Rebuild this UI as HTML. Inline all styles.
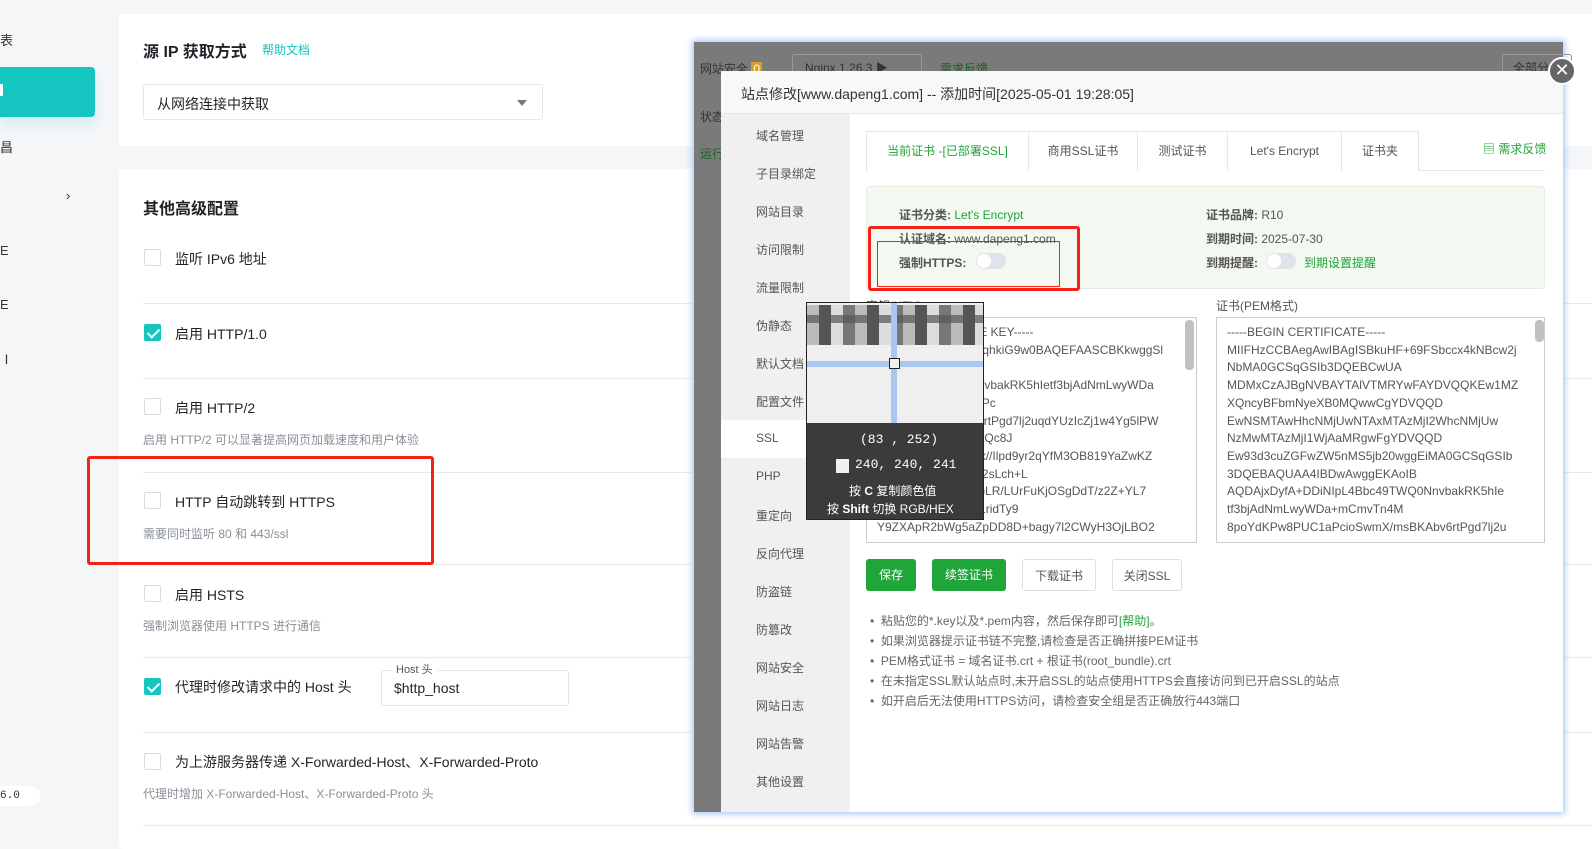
<!DOCTYPE html>
<html><head><meta charset="utf-8"><style>
*{box-sizing:border-box;margin:0;padding:0}
body{width:1592px;height:832px;overflow:hidden;background:#f5f6f8;font-family:"Liberation Sans","Noto Sans CJK SC",sans-serif;position:relative;color:#1f2329}
.a{position:absolute;white-space:nowrap}
.card{position:absolute;background:#fff;border-radius:4px}
.cb{position:absolute;width:17px;height:17px;border:1px solid #d8dbe0;border-radius:2px;background:#fff}
.cb.on{background:#14c5c0;border-color:#14c5c0}
.cb.on:after{content:"";position:absolute;left:5px;top:1px;width:5px;height:10px;border:solid #fff;border-width:0 2px 2px 0;transform:rotate(45deg)}
.lbl{font-size:14px;color:#1f2329}
.desc{font-size:12px;color:#8a8f99}
.sep{position:absolute;left:143px;right:0;height:1px;background:#e8eaed}
.nav{position:absolute;left:756px;font-size:12px;color:#555}
.m{font-size:12px;color:#555}
.btn{position:absolute;top:559px;height:32px;border-radius:3px;font-size:12px;line-height:32px;text-align:center}
.g{background:#20a53a;color:#fff}
.w{background:#fff;border:1px solid #dcdfe6;color:#555}
.tab{position:absolute;top:131px;height:40px;border:1px solid #e4e6eb;border-bottom:none;background:#fff;font-size:12px;color:#555;text-align:center;line-height:38px}
</style></head><body>
<div class="a" style="left:0;top:30px;font-size:13px;color:#333">表</div>
<div class="a" style="left:0;top:67px;width:95px;height:50px;background:#14c5c0;border-radius:0 4px 4px 0;box-shadow:0 8px 14px rgba(20,197,192,.15)"></div>
<div class="a" style="left:0;top:84px;width:3px;height:12px;background:#fff"></div>
<div class="a" style="left:0;top:137px;font-size:13px;color:#333">昌</div>
<div class="a" style="left:66px;top:188px;font-size:13px;color:#333">›</div>
<div class="a" style="left:0;top:243px;font-size:13px;color:#333">E</div>
<div class="a" style="left:0;top:297px;font-size:13px;color:#333">E</div>
<div class="a" style="left:0;top:349px;font-size:13px;color:#333">Ⅰ</div>
<div class="a" style="left:0;top:786px;width:40px;height:20px;background:#fff;border-radius:0 10px 10px 0;font-size:11px;line-height:20px;font-family:'Liberation Mono',monospace;color:#333">6.0</div>

<div class="card" style="left:119px;top:14px;width:1480px;height:132px"></div>
<div class="a" style="left:143px;top:38px;font-size:16px;font-weight:bold">源 IP 获取方式</div>
<div class="a" style="left:262px;top:41px;font-size:12px;color:#14c5c0">帮助文档</div>
<div class="a" style="left:143px;top:84px;width:400px;height:36px;border:1px solid #e3e6ea;border-radius:3px;background:#fff"></div>
<div class="a" style="left:157px;top:94px;font-size:14px">从网络连接中获取</div>
<div class="a" style="left:517px;top:100px;width:0;height:0;border-left:5px solid transparent;border-right:5px solid transparent;border-top:6px solid #777"></div>

<div class="card" style="left:119px;top:169px;width:1480px;height:680px"></div>
<div class="a" style="left:143px;top:195px;font-size:16px;font-weight:bold">其他高级配置</div>
<div class="cb" style="left:144px;top:249px"></div><div class="a lbl" style="left:175px;top:249px">监听 IPv6 地址</div>
<div class="sep" style="top:303px"></div>
<div class="cb on" style="left:144px;top:324px"></div><div class="a lbl" style="left:175px;top:324px">启用 HTTP/1.0</div>
<div class="sep" style="top:378px"></div>
<div class="cb" style="left:144px;top:398px"></div><div class="a lbl" style="left:175px;top:398px">启用 HTTP/2</div>
<div class="a desc" style="left:143px;top:431px">启用 HTTP/2 可以显著提高网页加载速度和用户体验</div>
<div class="sep" style="top:472px"></div>
<div class="cb" style="left:144px;top:492px"></div><div class="a lbl" style="left:175px;top:492px">HTTP 自动跳转到 HTTPS</div>
<div class="a desc" style="left:143px;top:525px">需要同时监听 80 和 443/ssl</div>
<div class="sep" style="top:564px"></div>
<div class="cb" style="left:144px;top:585px"></div><div class="a lbl" style="left:175px;top:585px">启用 HSTS</div>
<div class="a desc" style="left:143px;top:617px">强制浏览器使用 HTTPS 进行通信</div>
<div class="sep" style="top:657px"></div>
<div class="cb on" style="left:144px;top:678px"></div><div class="a lbl" style="left:175px;top:677px">代理时修改请求中的 Host 头</div>
<div class="a" style="left:381px;top:670px;width:188px;height:36px;border:1px solid #e3e6ea;border-radius:3px"></div>
<div class="a" style="left:392px;top:661px;font-size:11px;color:#555;background:#fff;padding:0 4px">Host 头</div>
<div class="a" style="left:394px;top:680px;font-size:14px">$http_host</div>
<div class="sep" style="top:732px"></div>
<div class="cb" style="left:144px;top:753px"></div><div class="a lbl" style="left:175px;top:752px">为上游服务器传递 X-Forwarded-Host、X-Forwarded-Proto</div>
<div class="a desc" style="left:143px;top:785px">代理时增加 X-Forwarded-Host、X-Forwarded-Proto 头</div>
<div class="sep" style="top:825px"></div>
<div class="a" style="left:87px;top:456px;width:347px;height:109px;border:3px solid #f5201a;border-radius:3px"></div>

<div class="a" style="left:694px;top:42px;width:869px;height:770px;background:#7a7a7a;box-shadow:0 0 6px 2px #a9c9f5"></div>
<div class="a" style="left:700px;top:60px;font-size:12px;color:#333">网站安全 <span style="background:#d8a021;color:#fff;padding:0 2px">0</span></div>
<div class="a" style="left:792px;top:54px;width:130px;height:22px;border:1px solid #999;border-radius:3px;font-size:12px;color:#333;padding:4px 0 0 12px">Nginx 1.26.3 ▶</div>
<div class="a" style="left:940px;top:60px;font-size:12px;color:#1c5d28">需求反馈</div>
<div class="a" style="left:1502px;top:54px;width:70px;height:22px;border:1px solid #999;border-radius:3px;font-size:12px;color:#333;padding:4px 0 0 10px">全部分</div>
<div class="a" style="left:700px;top:108px;font-size:12px;color:#333">状态</div>
<div class="a" style="left:700px;top:145px;font-size:12px;color:#1c5d28">运行</div>

<div class="a" style="left:721px;top:71px;width:842px;height:741px;background:#fff"></div>
<div class="a" style="left:721px;top:71px;width:842px;height:43px;background:#f8f8f8;border-bottom:1px solid #e8e8e8"></div>
<div class="a" style="left:741px;top:84px;font-size:14px;color:#333">站点修改[www.dapeng1.com] -- 添加时间[2025-05-01 19:28:05]</div>
<div class="a" style="left:1548px;top:57px;width:28px;height:28px;border-radius:50%;background:#666;border:2px solid #fff;color:#fff;font-size:18px;line-height:23px;text-align:center">✕</div>
<div class="a" style="left:721px;top:114px;width:129px;height:698px;background:#f0f0f0"></div>
<div class="a" style="left:721px;top:420px;width:129px;height:38px;background:#fff"></div>
<div class="nav" style="top:127px">域名管理</div><div class="nav" style="top:165px">子目录绑定</div>
<div class="nav" style="top:203px">网站目录</div><div class="nav" style="top:241px">访问限制</div>
<div class="nav" style="top:279px">流量限制</div><div class="nav" style="top:317px">伪静态</div>
<div class="nav" style="top:355px">默认文档</div><div class="nav" style="top:393px">配置文件</div>
<div class="nav" style="top:431px">SSL</div><div class="nav" style="top:469px">PHP</div>
<div class="nav" style="top:507px">重定向</div><div class="nav" style="top:545px">反向代理</div>
<div class="nav" style="top:583px">防盗链</div><div class="nav" style="top:621px">防篡改</div>
<div class="nav" style="top:659px">网站安全</div><div class="nav" style="top:697px">网站日志</div>
<div class="nav" style="top:735px">网站告警</div><div class="nav" style="top:773px">其他设置</div>

<div class="a" style="left:866px;top:170px;width:679px;height:1px;background:#e4e6eb"></div>
<div class="tab" style="left:866px;width:163px;color:#20a53a;border-bottom:1px solid #fff;height:41px">当前证书 -[已部署SSL]</div>
<div class="tab" style="left:1028px;width:110px">商用SSL证书</div>
<div class="tab" style="left:1137px;width:91px">测试证书</div>
<div class="tab" style="left:1227px;width:115px">Let's Encrypt</div>
<div class="tab" style="left:1341px;width:78px">证书夹</div>
<div class="a" style="left:1483px;top:140px;font-size:12px;color:#20a53a">▤ 需求反馈</div>

<div class="a" style="left:866px;top:186px;width:679px;height:103px;background:#f3f8f1;border:1px solid #e4eee0;border-radius:3px"></div>
<div class="a m" style="left:899px;top:206px"><b style="color:#555">证书分类:</b> <span style="color:#20a53a">Let's Encrypt</span></div>
<div class="a m" style="left:899px;top:230px"><b style="color:#555">认证域名:</b> www.dapeng1.com</div>
<div class="a m" style="left:899px;top:254px"><b style="color:#555">强制HTTPS:</b></div>
<div class="a" style="left:976px;top:253px;width:30px;height:16px;border-radius:8px;background:#e0e3ea"><div style="margin:1px;width:14px;height:14px;border-radius:50%;background:#fff"></div></div>
<div class="a m" style="left:1206px;top:206px"><b style="color:#555">证书品牌:</b> R10</div>
<div class="a m" style="left:1206px;top:230px"><b style="color:#555">到期时间:</b> 2025-07-30</div>
<div class="a m" style="left:1206px;top:254px"><b style="color:#555">到期提醒:</b></div>
<div class="a" style="left:1266px;top:253px;width:30px;height:16px;border-radius:8px;background:#e0e3ea"><div style="margin:1px;width:14px;height:14px;border-radius:50%;background:#fff"></div></div>
<div class="a m" style="left:1304px;top:254px;color:#20a53a">到期设置提醒</div>
<div class="a" style="left:868px;top:226px;width:212px;height:65px;border:3px solid #f5201a;border-radius:3px"></div>
<div class="a" style="left:877px;top:241px;width:183px;height:46px;border:1px solid #f5201a"></div>

<div class="a m" style="left:866px;top:297px">密钥(KEY)</div>
<div class="a m" style="left:1216px;top:297px">证书(PEM格式)</div>
<div class="a" style="left:866px;top:317px;width:331px;height:226px;border:1px solid #ccc;overflow:hidden;font-size:12px;color:#555;line-height:17.7px;padding:6px 10px">-----BEGIN PRIVATE KEY-----<br>MIIEvQIBADANBgkqhkiG9w0BAQEFAASCBKkwggSl<br>AQDAjxDyfA+DDiNI<br>IpL4Bbc49TWQ0NnvbakRK5hIetf3bjAdNmLwyWDa<br>8poYdKPw8PUC1aPc<br>ioSwmX/msBKAbv6rtPgd7lj2uqdYUzIcZj1w4Yg5lPW<br>H7oDQIXoEYt5e7otQc8J<br>L8hxN6gqNzCaRajx//Ilpd9yr2qYfM3OB819YaZwKZ<br>2UVi1VicZvpMGGT2sLch+L<br>tqsZgnUuXtA6dqjZpLR/LUrFuKjOSgDdT/z2Z+YL7<br>0b0DTNWkqcCvibt1ridTy9<br>Y9ZXApR2bWg5aZpDD8D+bagy7l2CWyH3OjLBO2</div>
<div class="a" style="left:1185px;top:320px;width:9px;height:50px;background:#c1c1c1;border-radius:4px"></div>
<div class="a" style="left:1216px;top:317px;width:329px;height:226px;border:1px solid #ccc;overflow:hidden;font-size:12px;color:#555;line-height:17.7px;padding:6px 10px">-----BEGIN CERTIFICATE-----<br>MIIFHzCCBAegAwIBAgISBkuHF+69FSbccx4kNBcw2j<br>NbMA0GCSqGSIb3DQEBCwUA<br>MDMxCzAJBgNVBAYTAlVTMRYwFAYDVQQKEw1MZ<br>XQncyBFbmNyeXB0MQwwCgYDVQQD<br>EwNSMTAwHhcNMjUwNTAxMTAzMjI2WhcNMjUw<br>NzMwMTAzMjI1WjAaMRgwFgYDVQQD<br>Ew93d3cuZGFwZW5nMS5jb20wggEiMA0GCSqGSIb<br>3DQEBAQUAA4IBDwAwggEKAoIB<br>AQDAjxDyfA+DDiNIpL4Bbc49TWQ0NnvbakRK5hIe<br>tf3bjAdNmLwyWDa+mCmvTn4M<br>8poYdKPw8PUC1aPcioSwmX/msBKAbv6rtPgd7lj2u</div>
<div class="a" style="left:1535px;top:320px;width:9px;height:22px;background:#c1c1c1;border-radius:4px"></div>

<div class="btn g" style="left:866px;width:50px">保存</div>
<div class="btn g" style="left:932px;width:74px">续签证书</div>
<div class="btn w" style="left:1022px;width:74px">下载证书</div>
<div class="btn w" style="left:1112px;width:70px">关闭SSL</div>
<div class="a m" style="left:870px;top:611px;line-height:20px;color:#666">
• &nbsp;粘贴您的*.key以及*.pem内容，然后保存即可<span style="color:#20a53a">[帮助]</span>。<br>
• &nbsp;如果浏览器提示证书链不完整,请检查是否正确拼接PEM证书<br>
• &nbsp;PEM格式证书 = 域名证书.crt + 根证书(root_bundle).crt<br>
• &nbsp;在未指定SSL默认站点时,未开启SSL的站点使用HTTPS会直接访问到已开启SSL的站点<br>
• &nbsp;如开启后无法使用HTTPS访问，请检查安全组是否正确放行443端口</div>

<div class="a" style="left:806px;top:302px;width:178px;height:218px;background:#3b3b3b;border:1px solid #222"></div>
<div class="a" style="left:807px;top:303px;width:176px;height:120px;background:#efefef"></div>
<div class="a" style="left:807px;top:305px;width:176px;height:40px;background:repeating-linear-gradient(90deg,#bbb 0 12px,#555 12px 24px,#ddd 24px 36px,#777 36px 48px)"></div>
<div class="a" style="left:807px;top:315px;width:176px;height:8px;background:#555;opacity:.7"></div>
<div class="a" style="left:891px;top:303px;width:6px;height:120px;background:#a8c8ef"></div>
<div class="a" style="left:807px;top:361px;width:176px;height:6px;background:#a8c8ef"></div>
<div class="a" style="left:889px;top:358px;width:11px;height:11px;border:1px solid #222;background:#f0f0f1"></div>
<div class="a" style="left:860px;top:432px;font-size:13px;color:#fff;font-family:'Liberation Mono',monospace">(83 , 252)</div>
<div class="a" style="left:836px;top:459px;width:13px;height:14px;background:#f0f0f1"></div>
<div class="a" style="left:855px;top:457px;font-size:13px;color:#fff;font-family:'Liberation Mono',monospace">240, 240, 241</div>
<div class="a" style="left:849px;top:482px;font-size:12px;color:#fff">按 <b>C</b> 复制颜色值</div>
<div class="a" style="left:827px;top:500px;font-size:12px;color:#fff">按 <b>Shift</b> 切换 RGB/HEX</div>
</body></html>
